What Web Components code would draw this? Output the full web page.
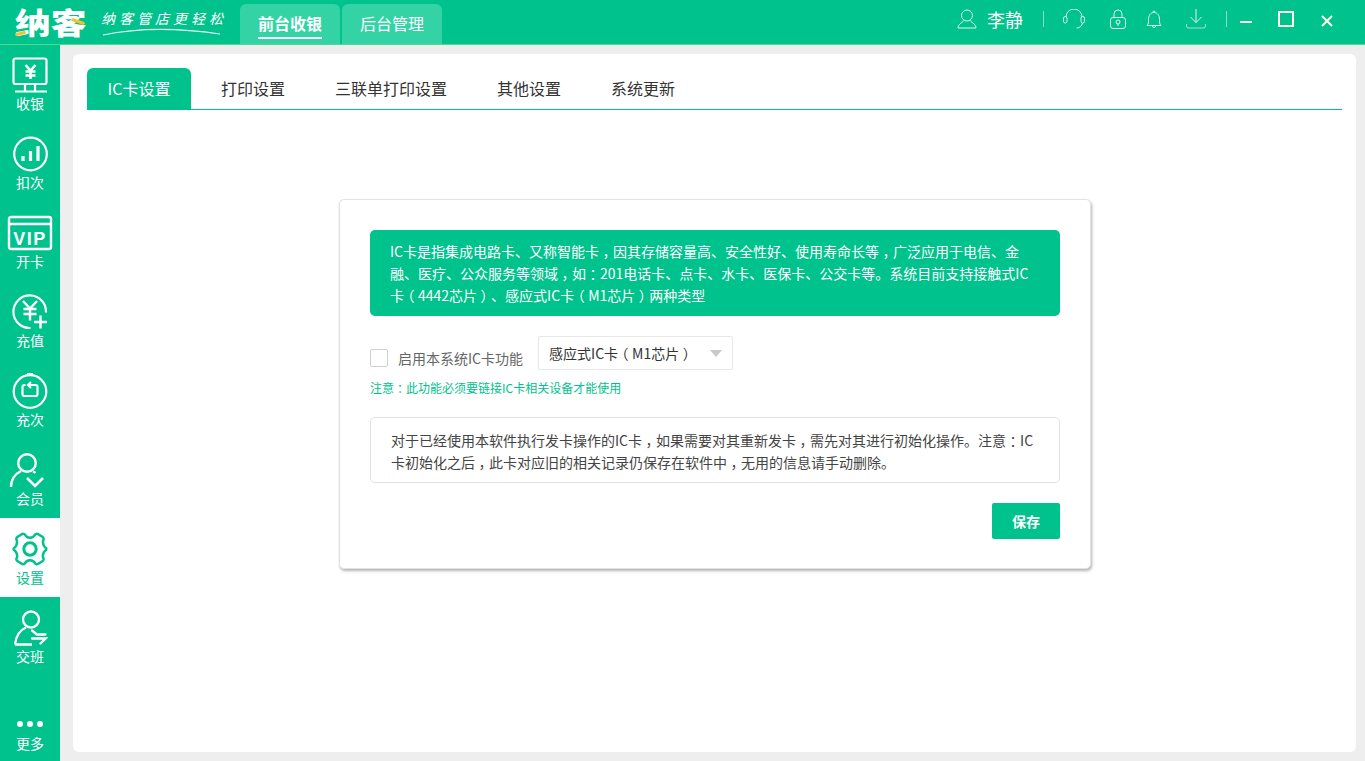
<!DOCTYPE html>
<html lang="zh"><head><meta charset="utf-8"><title>IC卡设置</title>
<style>
html,body{margin:0;height:100%;overflow:hidden}
body{font-family:"Noto Sans CJK SC","Liberation Sans",sans-serif;background:#eee}
</style></head><body>
<app-shell></app-shell>
<script>
const S='fill="none" stroke="currentColor"';
const ICONS={
 cash:`<svg width="46" height="36" viewBox="0 0 46 36" ${S} stroke-width="2.2"><rect x="6.500" y="1.500" width="33" height="25.500" rx="2"/><path d="M8 34.500h32M18 27v7M28 27v7"/><path d="M18.500 8l5 5.500 5-5.500M23.500 13.500V22M18.500 14.500h10M18.500 18.500h10" stroke-width="2.600"/></svg>`,
 chart:`<svg width="36" height="36" viewBox="0 0 36 36" ${S} stroke-width="2.200"><circle cx="18.500" cy="18" r="16.300"/><path d="M11 20v5M18.500 15v10M26 10v15" stroke-width="3.200"/></svg>`,
 vip:`<svg width="46" height="36" viewBox="0 0 46 36" ${S} stroke-width="2.400"><rect x="2" y="2" width="42" height="32" rx="2"/><path d="M2 9h42"/><text x="23" y="29.500" text-anchor="middle" font-family="Liberation Sans" font-weight="700" font-size="18" letter-spacing="1.500" fill="currentColor" stroke="none">VIP</text></svg>`,
 recharge:`<svg width="36" height="36" viewBox="0 0 36 36" ${S} stroke-width="2.200"><path d="M34 18.500A16.300 16.300 0 1 0 18.500 34"/><path d="M11 7l7 7.500 7-7.500M18 14.500v12M11.500 15h13M11.500 20h13" stroke-width="2.400"/><path d="M22 28h13M28.500 21.500v13" stroke-width="2.400"/></svg>`,
 times:`<svg width="36" height="36" viewBox="0 0 36 36" ${S} stroke-width="2.200"><circle cx="18" cy="18.500" r="16.300"/><path d="M15 1h6"/><path d="M17 12h6.500a2 2 0 0 1 2 2v7a2 2 0 0 1-2 2h-11a2 2 0 0 1-2-2v-7a2 2 0 0 1 2-2h1"/><path d="M19 9l-3 3 3 3"/></svg>`,
 member:`<svg style="margin-right:6px" width="36" height="36" viewBox="0 0 36 36" ${S} stroke-width="2.400"><circle cx="18" cy="11" r="8.800"/><path d="M2 35c0-7.500 4-13 10-16M24 19.500c1 .4 2 1 2.500 1.500"/><path d="M18 26l8 8 8-8" stroke-width="2.600"/></svg>`,
 gear:`<svg width="36" height="36" viewBox="0 0 36 36" ${S} stroke-width="2.400"><path d="M12.500 3.200c1.600 2.800 3.200 3.600 5.500 3.600s3.900-.8 5.500-3.600a3 3 0 0 1 2.200-.3l5 3a3 3 0 0 1 1 2c-1.500 3-1 5 .2 7 1 1.600 1.600 2 2.300 2.300a2.500 2.500 0 0 1 0 1.600c-.7.300-1.300.7-2.300 2.300-1.200 2-1.700 4-.2 7a3 3 0 0 1-1 2l-5 3a3 3 0 0 1-2.200-.3c-1.600-2.800-3.200-3.600-5.500-3.600s-3.900.8-5.500 3.600a3 3 0 0 1-2.200.3l-5-3a3 3 0 0 1-1-2c1.500-3 1-5-.2-7-1-1.600-1.600-2-2.300-2.300a2.500 2.500 0 0 1 0-1.600c.7-.3 1.300-.7 2.300-2.300 1.200-2 1.700-4 .2-7a3 3 0 0 1 1-2l5-3a3 3 0 0 1 2.200.3z"/><circle cx="18" cy="18" r="6.200" stroke-width="3"/></svg>`,
 shift:`<svg width="36" height="36" viewBox="0 0 36 36" ${S} stroke-width="2.300"><circle cx="19" cy="9.500" r="8"/><path d="M3 34.500C4 26 8 20 14 17.500M3 34.500h17"/><path d="M20 20.500l5 4h8.500M20 28.500h13.500l-5 5" stroke-linecap="round"/></svg>`,
 user:`<svg width="20" height="20" viewBox="0 0 20 20" ${S} stroke-width="1"><circle cx="10" cy="6.500" r="5.500"/><path d="M7 11c0 2-6 3.500-6 8h18c0-4.500-6-6-6-8"/></svg>`,
 headset:`<svg width="22" height="20" viewBox="0 0 22 20" ${S} stroke-width="1"><path d="M3 8a8 8 0 0 1 16 0"/><rect x=".5" y="7.500" width="3.500" height="6.500" rx="1.700"/><rect x="18" y="7.500" width="3.500" height="6.500" rx="1.700"/><path d="M19.500 14c-.5 3-3 5-6 5"/></svg>`,
 lock:`<svg width="18" height="20" viewBox="0 0 18 20" ${S} stroke-width="1"><path d="M5 9V5a4 4 0 0 1 8 0v4"/><rect x="1.500" y="8.500" width="15" height="11" rx="2.500"/><circle cx="9" cy="13" r="2"/><path d="M9 15v2"/></svg>`,
 bell:`<svg width="18" height="20" viewBox="0 0 18 20" ${S} stroke-width="1"><path d="M2 16.500c1.500-1.500 1.500-3 1.500-6 0-4 2-7 5.500-7s5.500 3 5.500 7c0 3 0 4.500 1.500 6z"/><path d="M8 3a1 1 0 0 1 2 0M7.500 17a1.500 1.500 0 0 0 3 0"/></svg>`,
 download:`<svg width="22" height="20" viewBox="0 0 22 20" ${S} stroke-width="1"><path d="M11 0v13.500M5.500 8l5.500 5.500L16.500 8"/><path d="M1.500 15v2a2 2 0 0 0 2 2h15a2 2 0 0 0 2-2v-2" stroke-opacity=".7"/></svg>`
};
const P=s=>s.replace(/[，：（）]/g,m=>`<span class="p">${m}</span>`);
function def(name,css,html){
 class C extends HTMLElement{
  constructor(){super();const r=this.attachShadow({mode:'open'});
   r.innerHTML=`<style>${css}</style>`+(typeof html==='function'?html(this):html);}
 }
 customElements.define(name,C);
}
def('nav-item',`:host{display:flex;flex-direction:column;align-items:center;height:79px;box-sizing:border-box;color:#fff;font-size:14px;line-height:16px;flex:none}
 :host([active]){background:#fff;color:#00c28c}
 .i{height:var(--h,36px);margin-top:var(--t,13px);display:flex;align-items:center;justify-content:center}
 .l{margin-top:var(--g,2px)}`,
 el=>`<div class="i">${ICONS[el.getAttribute('icon')]||'<slot name="icon"></slot>'}</div><div class="l"><slot></slot></div>`);
def('side-bar',`:host{display:flex;flex-direction:column;width:60px;background:#00c28c;flex:none}
 .t{margin-top:-1px;display:flex;flex-direction:column}
 .sp{flex:1}`,`<div class="t"><slot name="top"></slot></div><div class="sp"></div><slot name="bottom"></slot>`);
def('top-tab',`:host{display:flex;width:100px;height:40px;margin-top:4px;box-sizing:border-box;justify-content:center;background:#33d3a6;border-radius:6px 6px 0 0;color:#fff;font-size:16px;line-height:24px;padding-top:7px}
 span{display:block;height:28px;box-sizing:border-box}
 :host([active]) span{font-weight:700;border-bottom:2px solid #fff}`,`<span><slot></slot></span>`);
def('top-bar',`:host{display:flex;align-items:flex-start;height:45px;box-sizing:border-box;background:#00c28c;border-bottom:1px solid #4fdc8a;color:#fff;flex:none;position:relative}
 .logo{width:86px;margin-left:15px;font-size:30px;line-height:43px;font-weight:900;white-space:nowrap;height:44px;position:relative}
 .logo span{display:inline-block;transform:scaleX(1.19);transform-origin:left}
 .logo i{position:absolute;left:0;bottom:9px;width:11px;height:3px;background:#f2c230;border-radius:2px;transform:rotate(-15deg)}
 .logo b{position:absolute;left:56px;top:20px;width:14px;height:3px;background:#f2c230;border-radius:2px;transform:rotate(18deg)}
 .tag{width:137px;margin-right:2px;height:44px;position:relative;font:italic 14px/20px "Noto Sans CJK SC",sans-serif;letter-spacing:4px;white-space:nowrap;padding-top:8px;box-sizing:border-box}
 .tag svg{position:absolute;left:1px;top:28px}
 .tabs{display:flex;gap:2px}
 .right{margin-left:auto;display:flex;align-items:center;height:38px;color:#d8f7ec}
 .name{font-size:18px;color:#fff;margin:0 20px 0 10px;line-height:24px}
 .sep{width:1px;height:16px;background:rgba(255,255,255,.5)}
 .ic{display:flex;justify-content:center}
 .win{display:block;color:#fffbe8}`,
 `<div class="logo"><span>纳客</span><i></i><b></b></div>
  <div class="tag">纳客管店更轻松<svg width="120" height="9" viewBox="0 0 120 9" fill="none"><path d="M1 7C30 1 70-1 118 6" stroke="#e6fbf3" stroke-width="1.200"/></svg></div>
  <div class="tabs"><slot name="tabs"></slot></div>
  <div class="right">
   <span class="ic">${ICONS.user}</span><span class="name">李静</span><span class="sep"></span>
   <span class="ic" style="margin-left:19px">${ICONS.headset}</span>
   <span class="ic" style="margin-left:24px">${ICONS.lock}</span>
   <span class="ic" style="margin-left:18px">${ICONS.bell}</span>
   <span class="ic" style="margin-left:22px">${ICONS.download}</span>
   <span class="sep" style="margin-left:19px"></span>
   <svg class="win" style="margin-left:13px;margin-top:6px" width="12" height="4" viewBox="0 0 12 4"><path d="M0 2h12" stroke="currentColor" stroke-width="2"/></svg>
   <svg class="win" style="margin-left:26px" width="16" height="16" viewBox="0 0 16 16" fill="none"><rect x="1" y="1" width="14" height="14" stroke="currentColor" stroke-width="2"/></svg>
   <svg class="win" style="margin-left:27px;margin-right:32px;margin-top:3px" width="12" height="12" viewBox="0 0 12 12" fill="none"><path d="M1 1l10 10M11 1L1 11" stroke="currentColor" stroke-width="2"/></svg>
  </div>`);
def('tab-item',`:host{display:block;height:41px;box-sizing:border-box;padding:0 20px;font-size:16px;line-height:41px;color:#333;margin-right:10px;white-space:nowrap}
 :host([active]){background:#00c28c;color:#fff;border-radius:6px 6px 0 0;width:104px;padding:0;text-align:center}`,`<slot></slot>`);
def('tab-bar',`:host{display:flex;border-bottom:1px solid #00c28c}`,`<slot></slot>`);
def('app-select',`:host{display:flex;align-items:center;justify-content:space-between;width:195px;height:34px;box-sizing:border-box;border:1px solid #e8e8e8;border-radius:2px;padding:0 10px;font-size:14px;color:#333;background:#fff}
 i{border:6px solid transparent;border-top:7px solid #c9c9c9;border-bottom:0;display:block}`,`<span><slot></slot></span><i></i>`);
def('app-check',`:host{display:inline-flex;align-items:center;color:#666;font-size:14px;line-height:18px;white-space:nowrap}
 i{width:16px;height:16px;border:1px solid #d0d0d0;border-radius:2px;margin-right:10px;display:block}`,`<i></i><slot></slot>`);
def('app-button',`:host{display:flex;align-items:center;justify-content:center;width:68px;height:36px;background:#00c28c;color:#fff;font-size:14px;font-weight:700;border-radius:2px}`,`<slot></slot>`);
def('ic-card',`:host{display:block;width:752px;height:370px;box-sizing:border-box;padding:30px;background:#fff;border:1px solid #e2e2e2;border-radius:5px;box-shadow:1px 2px 3px rgba(0,0,0,.3);color:#333;font-size:14px}
 .intro{background:#00c28c;color:#fff;border-radius:5px;padding:10px 20px;line-height:22px;height:86px;box-sizing:border-box;white-space:nowrap}
 .row{display:flex;align-items:flex-start;margin-top:20px;height:34px}
 .row app-check{margin-top:13px;margin-right:15px}
 .warn{color:#00c28c;font-size:12px;line-height:16px;margin-top:10px}
 .info{border:1px solid #e2e2e2;border-radius:5px;margin-top:21px;padding:11px 20px 0;height:66px;box-sizing:border-box;line-height:22px;color:#444;white-space:nowrap}
 .foot{display:flex;justify-content:flex-end;margin-top:20px}`,
 `<div class="intro"><slot name="intro"></slot></div>
  <div class="row"><app-check><slot name="check"></slot></app-check><app-select><slot name="select"></slot></app-select></div>
  <div class="warn"><slot name="warn"></slot></div>
  <div class="info"><slot name="info"></slot></div>
  <div class="foot"><app-button>保存</app-button></div>`);
def('settings-panel',`:host{display:flex;flex-direction:column;flex:1;background:#fff;border-radius:6px;margin:9px 9px 9px 13px;padding:14px 14px 0;min-width:0}
 .c{display:flex;justify-content:center;padding-top:89px;padding-left:1px}`,`<slot name="tabs"></slot><div class="c"><slot></slot></div>`);
def('app-shell',`:host{display:flex;flex-direction:column;height:761px;width:1365px}
 .b{display:flex;flex:1;min-height:0}
 .p{display:inline-block;width:1em;text-align:center;font-feature-settings:"halt"}`,
 `<top-bar><top-tab slot="tabs" active>前台收银</top-tab><top-tab slot="tabs">后台管理</top-tab></top-bar>
 <div class="b">
  <side-bar>
   <nav-item slot="top" icon="cash">收银</nav-item>
   <nav-item slot="top" icon="chart">扣次</nav-item>
   <nav-item slot="top" icon="vip">开卡</nav-item>
   <nav-item slot="top" icon="recharge">充值</nav-item>
   <nav-item slot="top" icon="times">充次</nav-item>
   <nav-item slot="top" icon="member">会员</nav-item>
   <nav-item slot="top" icon="gear" active>设置</nav-item>
   <nav-item slot="top" icon="shift">交班</nav-item>
   <nav-item slot="bottom" style="--h:8px;--t:38px;--g:7px"><svg slot="icon" width="28" height="8" viewBox="0 0 28 8" fill="#fff"><circle cx="4" cy="4" r="3"/><circle cx="14" cy="4" r="3"/><circle cx="24" cy="4" r="3"/></svg>更多</nav-item>
  </side-bar>
  <settings-panel>
   <tab-bar slot="tabs"><tab-item active>IC卡设置</tab-item><tab-item>打印设置</tab-item><tab-item>三联单打印设置</tab-item><tab-item>其他设置</tab-item><tab-item>系统更新</tab-item></tab-bar>
   <ic-card>
    <span slot="intro">${P('IC卡是指集成电路卡、又称智能卡，因其存储容量高、安全性好、使用寿命长等，广泛应用于电信、金')}<br>${P('融、医疗、公众服务等领域，如：201电话卡、点卡、水卡、医保卡、公交卡等。系统目前支持接触式IC')}<br>${P('卡（4442芯片）、感应式IC卡（M1芯片）两种类型')}</span>
    <span slot="check">启用本系统IC卡功能</span>
    <span slot="select">${P('感应式IC卡（M1芯片）')}</span>
    <span slot="warn">${P('注意：此功能必须要链接IC卡相关设备才能使用')}</span>
    <span slot="info">${P('对于已经使用本软件执行发卡操作的IC卡，如果需要对其重新发卡，需先对其进行初始化操作。注意：IC')}<br>${P('卡初始化之后，此卡对应旧的相关记录仍保存在软件中，无用的信息请手动删除。')}</span>
   </ic-card>
  </settings-panel>
 </div>`);
</script></body></html>
